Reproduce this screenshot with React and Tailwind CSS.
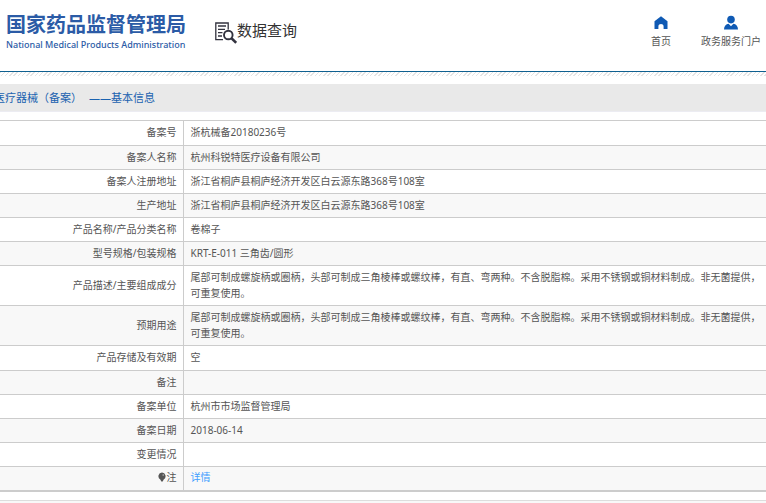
import React from 'react';
import { clsx } from 'clsx';

const description =
  '尾部可制成螺旋柄或圈柄，头部可制成三角棱棒或螺纹棒，有直、弯两种。不含脱脂棉。采用不锈钢或铜材料制成。非无菌提供，可重复使用。';

const rows = [
  { label: '备案号', value: '浙杭械备20180236号', height: 'h-[25px]' },
  { label: '备案人名称', value: '杭州科锐特医疗设备有限公司' },
  { label: '备案人注册地址', value: '浙江省桐庐县桐庐经济开发区白云源东路368号108室' },
  { label: '生产地址', value: '浙江省桐庐县桐庐经济开发区白云源东路368号108室' },
  { label: '产品名称/产品分类名称', value: '卷棉子' },
  { label: '型号规格/包装规格', value: 'KRT-E-011 三角齿/圆形' },
  { label: '产品描述/主要组成成分', value: description, height: 'h-10' },
  { label: '预期用途', value: description, height: 'h-10' },
  { label: '产品存储及有效期', value: '空', height: 'h-[25px]' },
  { label: '备注', value: '' },
  { label: '备案单位', value: '杭州市市场监督管理局' },
  { label: '备案日期', value: '2018-06-14' },
  { label: '变更情况', value: '' },
  { label: '注', value: '详情', marker: true, link: true },
];

function SearchDocIcon() {
  return (
    <svg className="w-[22px] h-[22px]" viewBox="0 0 22 22" fill="none" stroke="#33333f" aria-hidden="true">
      <path d="M13.2 7.5V1H.8V17.7H8" strokeWidth="1.3" />
      <path d="M3 4h8M3 7.3h7M3 10.6h4.5M3 14h4" strokeWidth="1.3" />
      <circle cx="13.3" cy="13" r="4.3" strokeWidth="1.9" />
      <path d="M16.6 16.3l4.6 4.6" strokeWidth="2.6" />
    </svg>
  );
}

function HomeIcon() {
  return (
    <svg className="w-4 h-4" viewBox="0 0 16 16" fill="#0f5ab4" aria-hidden="true">
      <path d="M8 1.2L14.5 6.2V14H10.6V11.4c0-3.2-5.2-3.2-5.2 0V14H1.5V6.2z" />
    </svg>
  );
}

function UserIcon() {
  return (
    <svg className="w-4 h-4" viewBox="0 0 16 16" fill="#0f5ab4" aria-hidden="true">
      <circle cx="8" cy="4.6" r="3.8" />
      <path d="M1 14.5C1 11 3 9 5.6 8.7L8 11.3l2.4-2.6C13 9 15 11 15 14.5z" />
    </svg>
  );
}

function MarkerIcon() {
  return (
    <svg className="inline-block w-2 h-2.5 mr-px align-[-1px]" viewBox="0 0 8 10" fill="#555" aria-hidden="true">
      <path d="M4 .5A3.7 3.7 0 0 0 2.3 7.4L3.3 9.5H4.7L5.7 7.4A3.7 3.7 0 0 0 4 .5z" />
      <circle cx="5.2" cy="3" r=".8" fill="#bbb" />
    </svg>
  );
}

function Header() {
  return (
    <header className="flex items-start h-[71px] pl-1.5 pr-[5px]">
      <div className="w-[181px] pt-3 text-[#2b5ba6] whitespace-nowrap">
        <div className="text-[20px] leading-[26px] font-bold">国家药品监督管理局</div>
        <div className="text-[9px] leading-[14px] font-medium">National Medical Products Administration</div>
      </div>
      <div className="flex items-start ml-7 pt-5 text-[#333]">
        <div className="pt-0.5">
          <SearchDocIcon />
        </div>
        <h1 className="text-[15px] leading-5">数据查询</h1>
      </div>
      <nav className="flex ml-auto gap-[30px] pt-[15px] text-[10px] leading-4 text-[#555]">
        <a href="#home" className="flex flex-col items-center gap-0.5">
          <HomeIcon />
          首页
        </a>
        <a href="#portal" className="flex flex-col items-center gap-0.5">
          <UserIcon />
          政务服务门户
        </a>
      </nav>
    </header>
  );
}

export default function App() {
  return (
    <div className="overflow-hidden bg-white font-['Noto_Sans','Noto_Sans_CJK_SC',sans-serif]">
      <Header />
      <div className="h-[13px] border-t border-[#0f6090]">
        <div className="h-1 bg-[repeating-linear-gradient(135deg,#e4e4e4_0px,#e4e4e4_1px,#fff_1px,#fff_3px)]"></div>
      </div>
      <h2 className="flex gap-[7px] h-7 -ml-1.5 bg-[#e9e9e9] text-[11px] leading-7 text-[#1a62b0] whitespace-nowrap border-b border-[#ececf2]">
        <span>医疗器械（备案）</span>
        <span>——基本信息</span>
      </h2>

      <table className="w-full mt-2 table-fixed border-collapse border-t border-b-2 border-[#ccc] text-[10px] leading-4 text-[#555]">
        <tbody>
          {rows.map((row) => (
            <tr key={row.label} className={clsx('border-b border-[#ccc] even:bg-[#f8f8f8]', row.height || 'h-6')}>
              <th scope="row" className="w-[183px] pr-1.5 pb-0.5 border-r border-[#ccc] text-right font-normal">
                {row.marker && <MarkerIcon />}
                {row.label}
              </th>
              <td className="pl-[7px] pb-0.5">
                {row.link ? <a href="#detail" className="text-[#409eff]">{row.value}</a> : row.value}
              </td>
            </tr>
          ))}
        </tbody>
      </table>

      <footer className="mt-2 h-2 border-t border-[#ddd] bg-[#f8f8f8]"></footer>
    </div>
  );
}
